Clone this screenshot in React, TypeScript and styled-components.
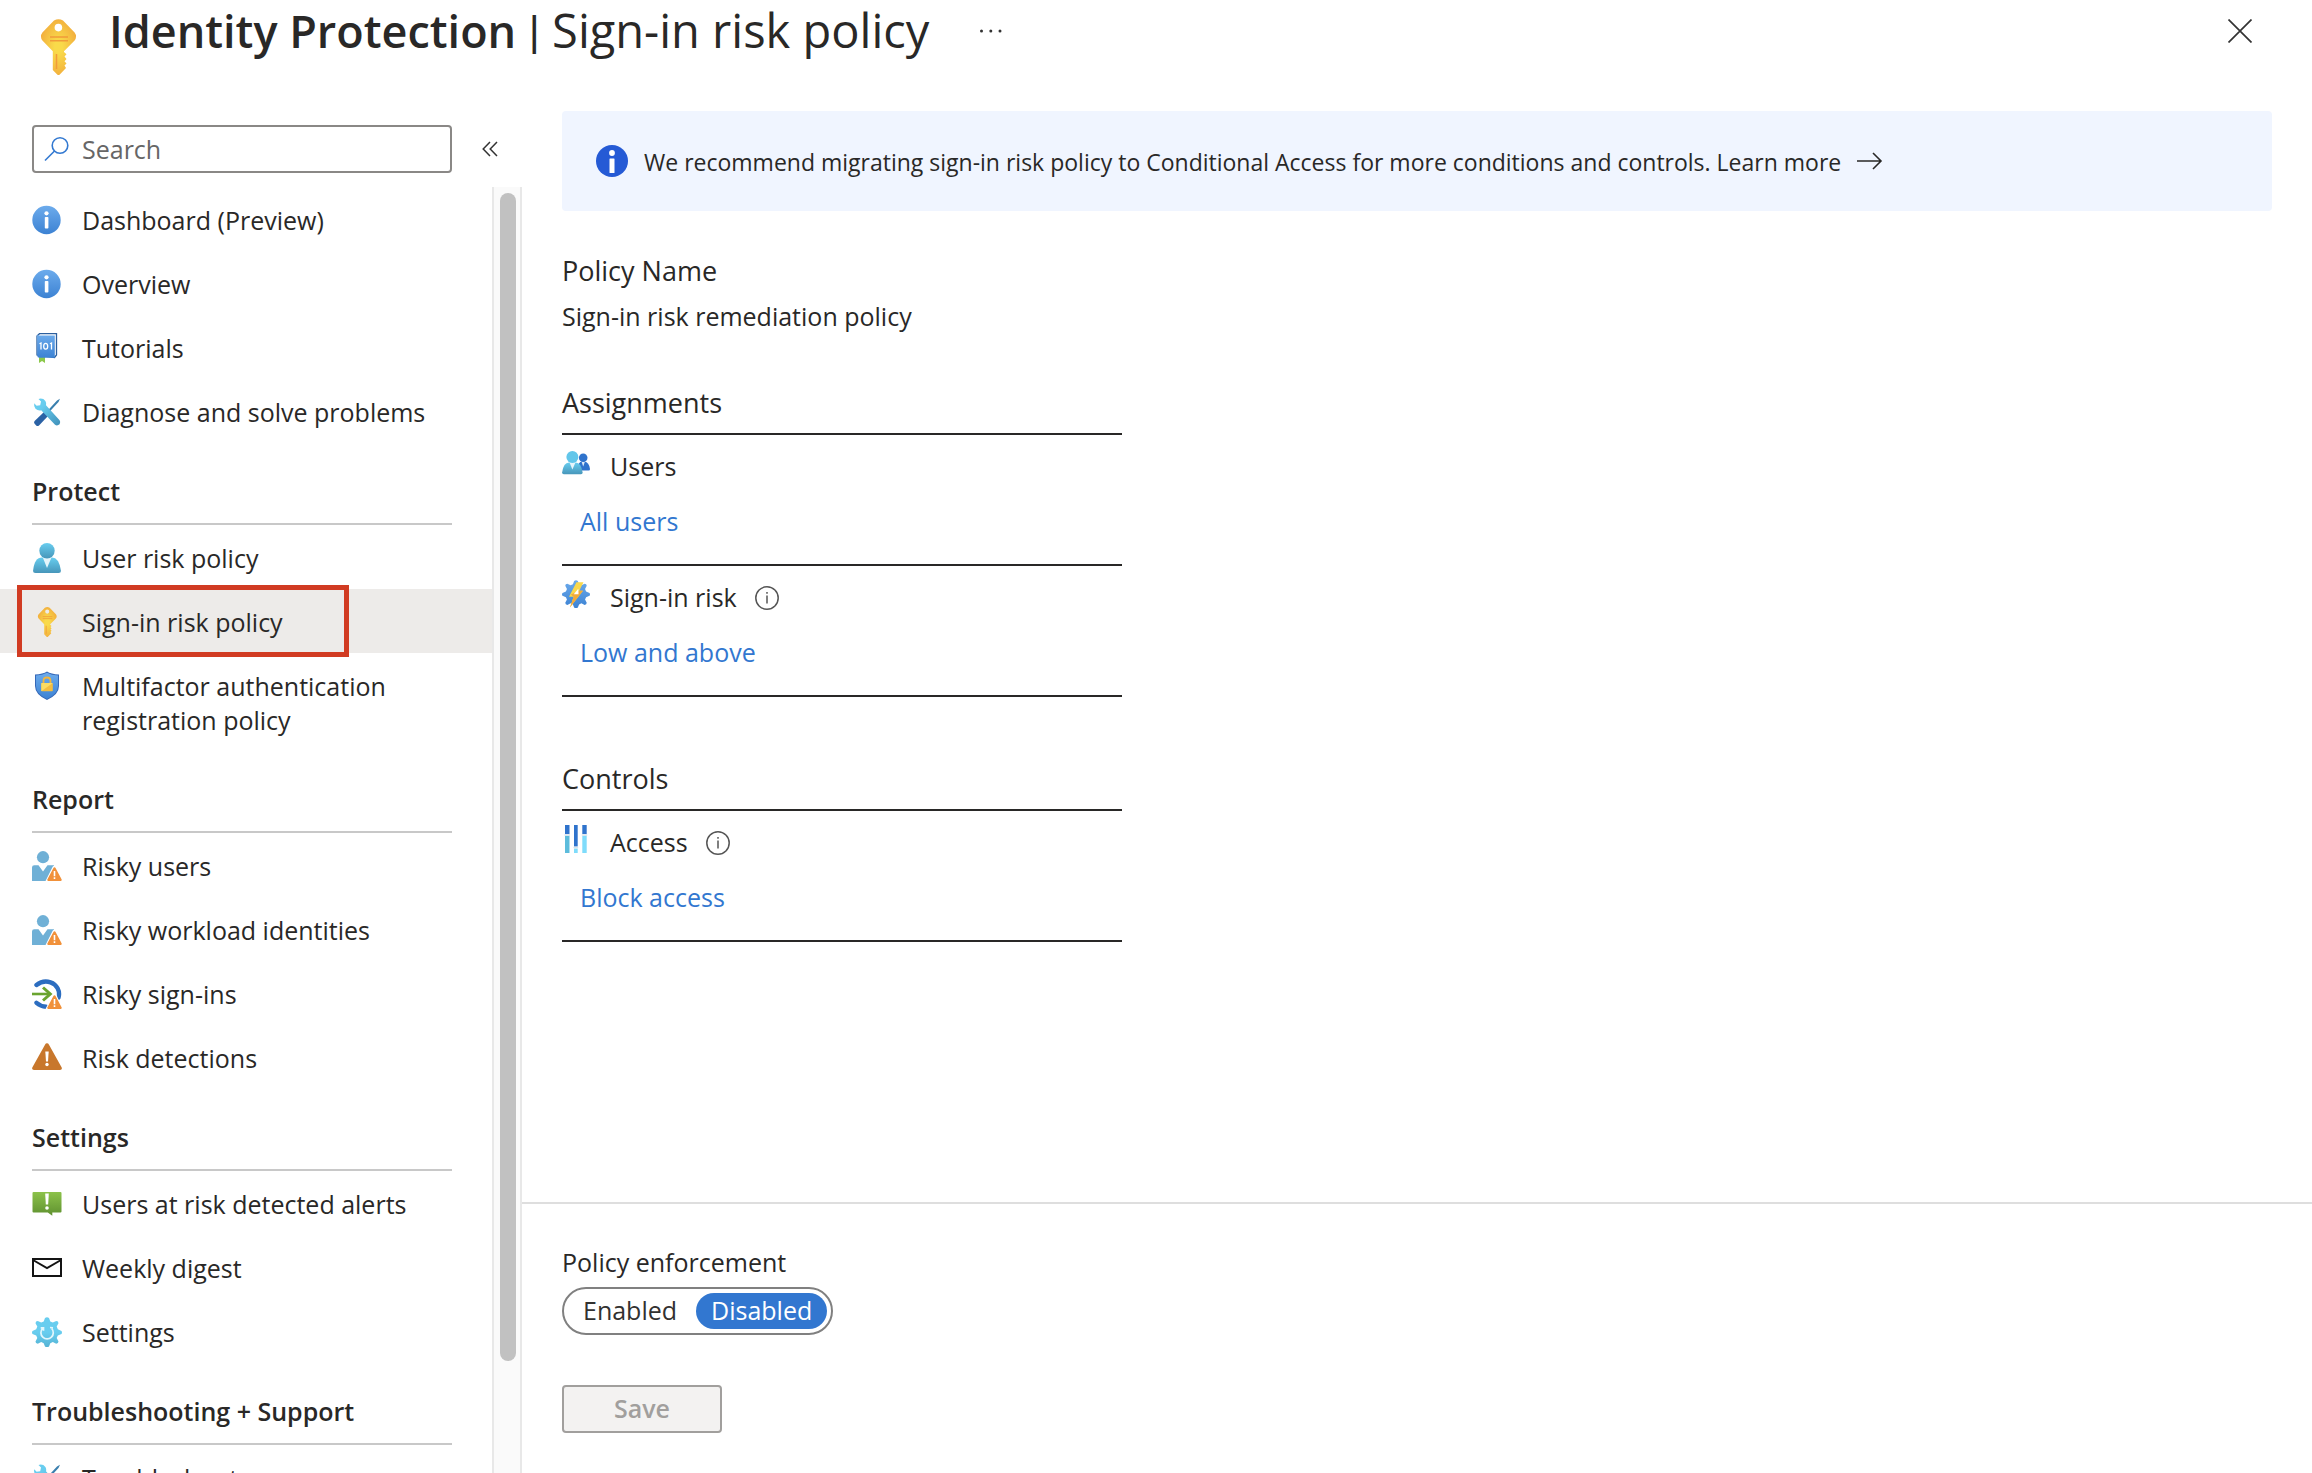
import React, { useState } from "react";
import styled, { createGlobalStyle } from "styled-components";

const GlobalStyle = createGlobalStyle`
  *, *::before, *::after { box-sizing: border-box; }
  html, body { margin: 0; padding: 0; }
  body {
    background: #fff;
    color: #292827;
    font-family: "Segoe UI", "Open Sans", "Noto Sans", sans-serif;
    font-size: 25px;
    line-height: 34px;
  }
  h1, h2, p, ul, dl, dd { margin: 0; padding: 0; }
  button, input { font: inherit; color: inherit; }
  svg { display: block; flex: none; }
`;

/* ---------- icons ---------- */

const KeyIcon = ({ size = 30 }: { size?: number }) => (
  <svg width={size} height={size} viewBox="0 0 56 56" aria-hidden="true">
    <defs>
      <radialGradient id="keyFill" cx="50%" cy="50%" r="55%">
        <stop offset="0.2" stopColor="#f9da4a" />
        <stop offset="1" stopColor="#f2ad3d" />
      </radialGradient>
    </defs>
    <path
      fill="url(#keyFill)"
      fillRule="evenodd"
      d="M24 1.4Q28.500-1 33 1.4L44.600 13.500Q47.500 17.500 44.600 21.500L34 32.200V33L36.500 35.300L34.500 37.500L36.500 40L34.500 42.200L36.500 44.500L34.500 46.500L36 49L29.800 55.400Q28.500 56.400 27.200 55.400L22.800 51V32.200L12.400 21.500Q9.500 17.500 12.400 13.500ZM28.400 4.800A3.800 3.800 0 1 0 28.400 12.400A3.800 3.800 0 1 0 28.400 4.800Z"
    />
    <path d="M20 18H38M20 21.700H38M26.500 35V50" stroke="#f19b3a" strokeWidth="1.500" fill="none" />
  </svg>
);

const InfoBlueIcon = () => (
  <svg width="30" height="30" viewBox="0 0 30 30" aria-hidden="true">
    <defs>
      <linearGradient id="infoFill" x1="0" y1="0" x2="0" y2="1">
        <stop offset="0" stopColor="#6cabec" />
        <stop offset="1" stopColor="#3c82d3" />
      </linearGradient>
    </defs>
    <circle cx="14.500" cy="15" r="14.200" fill="url(#infoFill)" />
    <circle cx="14.500" cy="8.300" r="2.100" fill="#fff" />
    <rect x="12.800" y="12" width="3.600" height="11.500" rx="0.800" fill="#fff" />
  </svg>
);

const BookIcon = () => (
  <svg width="30" height="30" viewBox="0 0 30 30" aria-hidden="true">
    <path d="M7 24V30L10 28L13 30V24Z" fill="#8cc84b" />
    <path d="M7.500 0.700H24.500V22L22.500 24.500L5 22V3Z" fill="#fff" stroke="#2c5f9e" strokeWidth="1.300" />
    <path d="M5.200 1.800V22.500Q5.200 24.800 7.500 24.800H22.800V2.500H7.500Q5.500 2.500 5.200 1.500Z" fill="url(#infoFill)" />
    <g stroke="#fff" strokeWidth="1.300" fill="none">
      <path d="M7.500 10.800L9 10V16.500M18 10.800L19.500 10V16.500" />
      <ellipse cx="13.700" cy="13.200" rx="2" ry="2.900" />
    </g>
  </svg>
);

const ToolsIcon = () => (
  <svg width="30" height="30" viewBox="0 0 30 30" aria-hidden="true">
    <defs>
      <linearGradient id="wrench" x1="0" y1="0" x2="1" y2="1">
        <stop offset="0.300" stopColor="#68cdef" />
        <stop offset="1" stopColor="#3f8fb8" />
      </linearGradient>
    </defs>
    <path d="M17 14.200L16 13.200L25 3.500L28 1.800L26.500 5L17.500 14.800Z" fill="#3a7fae" />
    <path d="M12 15L16 19L7 28.400Q5.500 29.600 4.200 28.400L2.600 26.800Q1.400 25.200 2.600 24Z" fill="#2b62a5" />
    <path
      d="M6.500 1.900Q11 0.800 13.400 4Q14.600 6 14 8.300L27.600 23.200Q29 25.200 27.600 27.300Q25.300 29.300 23 27.800L9.200 13.200Q6 14 3.500 11.700Q1.600 9.200 2.200 6.300L4.600 8.700L8.200 8.300L9 4.600Z"
      fill="url(#wrench)"
    />
  </svg>
);

const UserIcon = () => (
  <svg width="30" height="30" viewBox="0 0 30 30" aria-hidden="true">
    <defs>
      <linearGradient id="person" x1="0" y1="0" x2="0" y2="1">
        <stop offset="0" stopColor="#68cdef" />
        <stop offset="1" stopColor="#4796ba" />
      </linearGradient>
    </defs>
    <path d="M3.500 30Q1 30 1.100 27.500Q2.500 14.500 10 14.500H20Q27 14.500 28.900 27.500Q29 30 26.500 30Z" fill="url(#person)" />
    <path d="M10.800 14.500H19.500L15 25Z" fill="#e6f5fb" />
    <circle cx="15" cy="7.800" r="7.700" fill="url(#person)" />
  </svg>
);

const ShieldIcon = () => (
  <svg width="30" height="30" viewBox="0 0 30 30" aria-hidden="true">
    <path
      d="M15 0.500Q19 3.200 27 3.500V15Q27 23.500 15 29Q3 23.500 3 15V3.500Q11 3.200 15 0.500Z"
      fill="#3568b8"
    />
    <path
      d="M15 1.800Q19.500 4.300 26 4.600V15Q26 22.800 15 28Q4 22.800 4 15V4.600Q10.500 4.300 15 1.800Z"
      fill="url(#infoFill)"
    />
    <path d="M11.500 12.500V10Q11.500 6.500 15 6.500Q18.500 6.500 18.500 10V12.500" fill="none" stroke="#f2b53d" strokeWidth="1.800" />
    <rect x="9.300" y="12" width="11.500" height="8.200" rx="0.800" fill="#f4bd40" />
    <path d="M9.300 12H20.800L9.300 20.200Z" fill="#fbdc63" />
  </svg>
);

const WarnBadge = () => (
  <>
    <path d="M22.500 14.500Q23.800 14.500 24.500 16L30 28.500Q30 30 28.500 30H13.500L20.500 16Q21.200 14.500 22.500 14.500Z" fill="#fff" />
    <path d="M22.500 16.300Q23.300 16.300 23.700 17.300L29.700 28.600Q30 30 28.800 30H16.200Q15 30 15.300 28.600L21.300 17.300Q21.700 16.300 22.500 16.300Z" fill="#f1913a" />
    <path d="M22.500 20V25.300M22.500 26.300V28" stroke="#fff" strokeWidth="1.600" />
  </>
);

const RiskyUserIcon = () => (
  <svg width="30" height="30" viewBox="0 0 30 30" aria-hidden="true">
    <circle cx="11" cy="6.200" r="6.100" fill="#6fb0d6" />
    <path d="M0 30V16.500Q0 14.200 2.300 14.200H6.500L11 20.500L15.500 14.200H22V30Z" fill="#6fb0d6" />
    <WarnBadge />
  </svg>
);

const RiskySignInIcon = () => (
  <svg width="30" height="30" viewBox="0 0 30 30" aria-hidden="true">
    <path d="M4.500 6Q11 0.800 18.500 3.300A12.300 12.300 0 0 1 26.500 18.500M4.500 23.800Q8.500 27.300 14 27.700" fill="none" stroke="#2c6dc0" strokeWidth="4.400" strokeLinecap="round" />
    <path d="M0 15H18" stroke="#6aa42f" strokeWidth="2.600" />
    <path d="M11 8.500L18.300 15L11 21.500" fill="none" stroke="#6aa42f" strokeWidth="3" />
    <WarnBadge />
  </svg>
);

const WarningIcon = () => (
  <svg width="30" height="30" viewBox="0 0 30 30" aria-hidden="true">
    <path d="M15 0.300Q16.300 0.300 17 1.700L29.700 24.600Q30.500 27 28 27H2Q-0.500 27 0.300 24.600L13 1.700Q13.700 0.300 15 0.300Z" fill="#c8772c" />
    <path d="M13.300 8.500H16.700L16 18.500H14Z" fill="#fff" />
    <circle cx="15" cy="21.500" r="1.700" fill="#fff" />
  </svg>
);

const AlertIcon = () => (
  <svg width="30" height="30" viewBox="0 0 30 30" aria-hidden="true">
    <defs>
      <linearGradient id="alertFill" x1="0" y1="0" x2="0" y2="1">
        <stop offset="0" stopColor="#8cc24a" />
        <stop offset="1" stopColor="#5f9130" />
      </linearGradient>
    </defs>
    <path d="M1.500 3H28.500Q29.500 3 29.500 4V22.500Q29.500 23.500 28.500 23.500H20.300V26.800L15.800 23.500H1.500Q0.500 23.500 0.500 22.500V4Q0.500 3 1.500 3Z" fill="url(#alertFill)" />
    <path d="M13.200 4.500H16.800L16.200 15.500H13.800Z" fill="#fff" />
    <circle cx="15" cy="19" r="1.800" fill="#fff" />
  </svg>
);

const MailIcon = () => (
  <svg width="30" height="30" viewBox="0 0 30 30" aria-hidden="true">
    <path d="M1 6H29V23H1Z" fill="none" stroke="#141414" strokeWidth="2" />
    <path d="M1 7L15 15L29 7" fill="none" stroke="#141414" strokeWidth="2" />
  </svg>
);

const gearPath =
  "M13 1Q15-0.500 17 1L18.300 4.600L20.800 5.600L24.200 4Q26.500 4 26.500 6.200L24.700 9.600L25.800 12.200L29.500 14Q30.500 15.500 29.500 17L25.800 18.500L24.700 21L26.500 24.500Q26.500 26.600 24.200 26.700L20.800 25L18.300 26.200L17 29.500Q15 31 13 29.500L11.700 26.200L9.200 25L5.800 26.700Q3.500 26.600 3.500 24.500L5.300 21L4.200 18.500L0.500 17Q-0.500 15.500 0.500 14L4.200 12.200L5.300 9.600L3.500 6.200Q3.500 4 5.800 4L9.200 5.600L11.700 4.600Z";

const GearIcon = () => (
  <svg width="30" height="30" viewBox="0 0 30 30" aria-hidden="true">
    <defs>
      <linearGradient id="gearFill" x1="0" y1="0" x2="0" y2="1">
        <stop offset="0.500" stopColor="#68cdef" />
        <stop offset="1" stopColor="#55b3d4" />
      </linearGradient>
    </defs>
    <path d={gearPath} fill="url(#gearFill)" />
    <path d="M10.500 11.500A6.200 6.200 0 1 0 19.700 11.500M8.700 10.800H11.500V13.800M18 10.500L21 10.800" fill="none" stroke="#e2f6fc" strokeWidth="1.700" />
  </svg>
);

const UsersPairIcon = () => (
  <svg width="28" height="28" viewBox="0 0 28 28" aria-hidden="true">
    <path d="M15 21Q16 12.500 20 12.500H22.500Q27 13 28 20Q28 21.500 26.700 21.500H15Z" fill="#2f73cc" />
    <path d="M19.500 12.500H23L21.200 17.500Z" fill="#dbeaf8" />
    <circle cx="21.200" cy="8.800" r="4.300" fill="#2f73cc" />
    <path d="M1.800 25.300Q0 25.300 0.100 23.500Q1.500 13.500 7 13.500H13.800Q19 13.500 20.600 23.500Q20.700 25.300 19 25.300Z" fill="url(#person)" />
    <path d="M7.500 13.500H13.500L10.400 20.500Z" fill="#e6f5fb" />
    <circle cx="10.400" cy="8" r="6" fill="#62c6ea" />
  </svg>
);

const RiskGearIcon = () => (
  <svg width="28" height="28" viewBox="0 0 30 30" aria-hidden="true">
    <path d={gearPath} fill="url(#infoFill)" />
    <path d="M15.500 2.500H23L18.500 11.500H22.500L8.500 29.500L12.500 18H7.500Z" fill="#f9d84c" />
    <path d="M18.500 11.500H22.500L8.500 29.500L12.500 18L9.500 15.500Z" fill="#f2a93b" />
    <path d="M17.500 9.500L12.500 15.300H17.700Z" fill="#fff" />
  </svg>
);

const AccessIcon = () => (
  <svg width="28" height="28" viewBox="0 0 28 28" aria-hidden="true">
    <path d="M3 0H7.500V9H3ZM12 0H15.700V21.500H12ZM20.300 0H24.700V9H20.300Z" fill="#2f73cc" />
    <path d="M3 10.800H7.500V28H3Z" fill="#5cbcdc" />
    <path d="M20.300 10.800H24.700V28H20.300ZM12 23.500H15.700V28H12Z" fill="#7fdcfb" />
    <path d="M2.500 10H8M11.500 22.500H16.200M19.800 10H25.200" stroke="#d6e2ec" strokeWidth="1.400" />
  </svg>
);

const SearchIcon = () => (
  <svg width="26" height="26" viewBox="0 0 26 26" aria-hidden="true">
    <circle cx="16" cy="9.500" r="7.800" fill="none" stroke="#3379d1" strokeWidth="1.600" />
    <path d="M10.500 15L1 24.500" stroke="#3379d1" strokeWidth="1.600" />
  </svg>
);

const CollapseIcon = () => (
  <svg width="16" height="16" viewBox="0 0 16 16" aria-hidden="true">
    <path d="M8 1L1.200 8L8 15M15 1L8.200 8L15 15" fill="none" stroke="#333" strokeWidth="1.500" />
  </svg>
);

const CloseIcon = () => (
  <svg width="24" height="24" viewBox="0 0 24 24" aria-hidden="true">
    <path d="M0.500 0.500L23.500 23.500M23.500 0.500L0.500 23.500" stroke="#333" strokeWidth="1.700" />
  </svg>
);

const MoreIcon = () => (
  <svg width="24" height="8" viewBox="0 0 24 8" aria-hidden="true">
    <circle cx="2.500" cy="4" r="1.500" fill="#333" />
    <circle cx="11.800" cy="4" r="1.500" fill="#333" />
    <circle cx="21" cy="4" r="1.500" fill="#333" />
  </svg>
);

const BannerInfoIcon = () => (
  <svg width="32" height="32" viewBox="0 0 32 32" aria-hidden="true">
    <circle cx="16" cy="16" r="16" fill="#255ad5" />
    <circle cx="16" cy="8" r="2.900" fill="#fff" />
    <rect x="13.500" y="13.500" width="5" height="14.500" rx="0.500" fill="#fff" />
  </svg>
);

const ArrowIcon = () => (
  <svg width="26" height="18" viewBox="0 0 26 18" aria-hidden="true">
    <path d="M0 9H24M16 1L24 9L16 17" fill="none" stroke="#292827" strokeWidth="1.600" />
  </svg>
);

const HintIcon = () => (
  <svg width="24" height="24" viewBox="0 0 24 24" aria-hidden="true">
    <circle cx="12" cy="12" r="11.200" fill="none" stroke="#555" strokeWidth="1.500" />
    <path d="M12 9.500V17.500M12 6V7.800" stroke="#555" strokeWidth="1.500" />
  </svg>
);

/* ---------- layout ---------- */

const Page = styled.div`
  display: flex;
  flex-direction: column;
  height: 100vh;
  overflow: hidden;
`;

const Header = styled.header`
  display: flex;
  align-items: flex-start;
  flex: none;
  height: 111px;
  padding: 0 60px 0 30px;
`;

const HeaderIcon = styled.span`
  padding-top: 19px;
  margin-right: 23px;
`;

const Title = styled.h1`
  font-size: 47px;
  line-height: 60px;
  font-weight: 400;
  white-space: nowrap;
  strong { font-size: 45px; font-weight: 600; }
`;

const TitleDivider = styled.span`
  font-family: Roboto, sans-serif;
`;

const IconButton = styled.button`
  display: flex;
  padding: 0;
  border: 0;
  background: none;
  cursor: pointer;
`;

const MoreButton = styled(IconButton)`
  margin: 27px auto 0 50px;
`;

const CloseButton = styled(IconButton)`
  margin-top: 19px;
`;

const Body = styled.div`
  display: flex;
  flex: 1;
  min-height: 0;
`;

const Sidebar = styled.aside`
  display: flex;
  flex-direction: column;
  flex: none;
  width: 522px;
`;

const SearchRow = styled.div`
  display: flex;
  align-items: center;
  gap: 30px;
  padding: 14px 24px 14px 32px;
`;

const SearchBox = styled.label`
  display: flex;
  align-items: center;
  gap: 12px;
  width: 420px;
  height: 48px;
  padding: 0 10px;
  border: 2px solid #8a8886;
  border-radius: 4px;
`;

const SearchInput = styled.input`
  flex: 1;
  min-width: 0;
  height: 34px;
  padding: 0;
  border: 0;
  outline: 0;
  background: none;
  &::placeholder { color: #666; opacity: 1; }
`;

const NavArea = styled.div`
  display: flex;
  flex: 1;
  min-height: 0;
`;

const Nav = styled.nav`
  flex: 1;
  min-width: 0;
  overflow: hidden;
`;

const NavHeading = styled.h2`
  margin: 0 40px 0 32px;
  padding: 31px 0 15px;
  border-bottom: 2px solid #c8c8c8;
  font-size: 25px;
  line-height: 34px;
  font-weight: 600;
`;

const NavList = styled.ul`
  list-style: none;
`;

const NavItem = styled.li<{ $active?: boolean }>`
  position: relative;
  background: ${(p) => (p.$active ? "#edebe9" : "transparent")};
`;

const NavLink = styled.a`
  display: flex;
  align-items: flex-start;
  gap: 20px;
  padding: 16px 60px 14px 32px;
  color: inherit;
  text-decoration: none;
  svg { margin-top: 2px; }
`;

const Highlight = styled.span`
  position: absolute;
  top: -4px;
  left: 17px;
  width: 332px;
  height: 72px;
  border: 5px solid #d13b22;
  pointer-events: none;
`;

const ScrollTrack = styled.div`
  flex: none;
  width: 30px;
  padding: 6px 6px 112px;
  border: solid #e8e8e8;
  border-width: 0 2px;
  background: #fafafa;
`;

const ScrollThumb = styled.div`
  width: 16px;
  height: 100%;
  border-radius: 8px;
  background: #c1c1c1;
`;

const Main = styled.main`
  display: flex;
  flex-direction: column;
  flex: 1;
  min-width: 0;
`;

const Content = styled.div`
  flex: 1;
  padding: 0 40px;
`;

const Banner = styled.a`
  display: flex;
  align-items: center;
  height: 100px;
  padding: 0 34px;
  border-radius: 4px;
  background: #f0f5ff;
  color: inherit;
  font-size: 23px;
  text-decoration: none;
`;

const BannerText = styled.span`
  margin: 2px 16px 0;
`;

const PolicyName = styled.section`
  margin-top: 42px;
`;

const Heading = styled.h2`
  font-size: 27px;
  line-height: 36px;
  font-weight: 400;
`;

const PolicyValue = styled.p`
  margin-top: 10px;
`;

const Group = styled.section<{ $gap: number }>`
  max-width: 560px;
  margin-top: ${(p) => p.$gap}px;
  ${Heading} {
    padding-bottom: 12px;
    border-bottom: 2px solid #292827;
  }
`;

const Setting = styled.div`
  padding: 14px 0 26px;
  border-bottom: 2px solid #292827;
`;

const SettingLabel = styled.div`
  display: flex;
  align-items: flex-start;
  height: 34px;
  margin-bottom: 21px;
  span { margin: 0 18px 0 20px; }
`;

const HintButton = styled(IconButton)`
  margin-top: 6px;
`;

const SettingLink = styled.a`
  display: inline-block;
  vertical-align: top;
  margin-left: 18px;
  color: #3277d0;
  text-decoration: none;
`;

const Footer = styled.footer`
  flex: none;
  padding: 41px 40px 40px;
  border-top: 2px solid #dedede;
`;

const FieldLabel = styled.div`
  margin-bottom: 8px;
`;

const Toggle = styled.div`
  display: flex;
  gap: 4px;
  width: fit-content;
  height: 48px;
  padding: 4px;
  border: 2px solid #808080;
  border-radius: 24px;
`;

const ToggleOption = styled.label<{ $on: boolean }>`
  padding: 0 15px;
  border-radius: 18px;
  line-height: 35px;
  background: ${(p) => (p.$on ? "#3277d0" : "transparent")};
  color: ${(p) => (p.$on ? "#fff" : "#323130")};
  cursor: pointer;
`;

const HiddenRadio = styled.input`
  position: absolute;
  width: 1px;
  height: 1px;
  margin: 0;
  opacity: 0;
`;

const SaveButton = styled.button`
  display: block;
  width: 160px;
  height: 48px;
  margin-top: 50px;
  padding: 0 0 2px;
  border: 2px solid #a19f9d;
  border-radius: 4px;
  background: #f3f2f1;
  color: #a19f9d;
  font-weight: 600;
`;

/* ---------- data ---------- */

type Item = { label: string; icon: React.ReactNode; active?: boolean };

const sections: { title?: string; items: Item[] }[] = [
  {
    items: [
      { label: "Dashboard (Preview)", icon: <InfoBlueIcon /> },
      { label: "Overview", icon: <InfoBlueIcon /> },
      { label: "Tutorials", icon: <BookIcon /> },
      { label: "Diagnose and solve problems", icon: <ToolsIcon /> },
    ],
  },
  {
    title: "Protect",
    items: [
      { label: "User risk policy", icon: <UserIcon /> },
      { label: "Sign-in risk policy", icon: <KeyIcon />, active: true },
      { label: "Multifactor authentication registration policy", icon: <ShieldIcon /> },
    ],
  },
  {
    title: "Report",
    items: [
      { label: "Risky users", icon: <RiskyUserIcon /> },
      { label: "Risky workload identities", icon: <RiskyUserIcon /> },
      { label: "Risky sign-ins", icon: <RiskySignInIcon /> },
      { label: "Risk detections", icon: <WarningIcon /> },
    ],
  },
  {
    title: "Settings",
    items: [
      { label: "Users at risk detected alerts", icon: <AlertIcon /> },
      { label: "Weekly digest", icon: <MailIcon /> },
      { label: "Settings", icon: <GearIcon /> },
    ],
  },
  {
    title: "Troubleshooting + Support",
    items: [{ label: "Troubleshoot", icon: <ToolsIcon /> }],
  },
];

type SettingRowProps = { icon: React.ReactNode; label: string; value: string; hint?: boolean };

const SettingRow = ({ icon, label, value, hint }: SettingRowProps) => (
  <Setting>
    <SettingLabel>
      {icon}
      <span>{label}</span>
      {hint && (
        <HintButton type="button" aria-label={`About ${label}`}>
          <HintIcon />
        </HintButton>
      )}
    </SettingLabel>
    <SettingLink href="#">{value}</SettingLink>
  </Setting>
);

export default function App() {
  const [enforcement, setEnforcement] = useState("Disabled");

  return (
    <Page>
      <GlobalStyle />
      <Header>
        <HeaderIcon>
          <KeyIcon size={56} />
        </HeaderIcon>
        <Title>
          <strong>Identity Protection</strong> <TitleDivider>|</TitleDivider> Sign-in risk policy
        </Title>
        <MoreButton type="button" aria-label="More">
          <MoreIcon />
        </MoreButton>
        <CloseButton type="button" aria-label="Close">
          <CloseIcon />
        </CloseButton>
      </Header>
      <Body>
        <Sidebar>
          <SearchRow>
            <SearchBox>
              <SearchIcon />
              <SearchInput type="text" placeholder="Search" aria-label="Search" />
            </SearchBox>
            <IconButton type="button" aria-label="Collapse menu">
              <CollapseIcon />
            </IconButton>
          </SearchRow>
          <NavArea>
            <Nav>
              {sections.map((section) => (
                <React.Fragment key={section.title ?? "top"}>
                  {section.title && <NavHeading>{section.title}</NavHeading>}
                  <NavList>
                    {section.items.map((item) => (
                      <NavItem key={item.label} $active={item.active}>
                        <NavLink href="#" aria-current={item.active ? "page" : undefined}>
                          {item.icon}
                          <span>{item.label}</span>
                        </NavLink>
                        {item.active && <Highlight />}
                      </NavItem>
                    ))}
                  </NavList>
                </React.Fragment>
              ))}
            </Nav>
            <ScrollTrack>
              <ScrollThumb />
            </ScrollTrack>
          </NavArea>
        </Sidebar>
        <Main>
          <Content>
            <Banner href="#">
              <BannerInfoIcon />
              <BannerText>
                We recommend migrating sign-in risk policy to Conditional Access for more conditions and controls. Learn more
              </BannerText>
              <ArrowIcon />
            </Banner>
            <PolicyName>
              <Heading>Policy Name</Heading>
              <PolicyValue>Sign-in risk remediation policy</PolicyValue>
            </PolicyName>
            <Group $gap={52}>
              <Heading>Assignments</Heading>
              <SettingRow icon={<UsersPairIcon />} label="Users" value="All users" />
              <SettingRow icon={<RiskGearIcon />} label="Sign-in risk" value="Low and above" hint />
            </Group>
            <Group $gap={64}>
              <Heading>Controls</Heading>
              <SettingRow icon={<AccessIcon />} label="Access" value="Block access" hint />
            </Group>
          </Content>
          <Footer>
            <FieldLabel id="enforcement-label">Policy enforcement</FieldLabel>
            <Toggle role="radiogroup" aria-labelledby="enforcement-label">
              {["Enabled", "Disabled"].map((option) => (
                <ToggleOption key={option} $on={enforcement === option}>
                  <HiddenRadio
                    type="radio"
                    name="enforcement"
                    checked={enforcement === option}
                    onChange={() => setEnforcement(option)}
                  />
                  {option}
                </ToggleOption>
              ))}
            </Toggle>
            <SaveButton type="button" disabled>
              Save
            </SaveButton>
          </Footer>
        </Main>
      </Body>
    </Page>
  );
}
